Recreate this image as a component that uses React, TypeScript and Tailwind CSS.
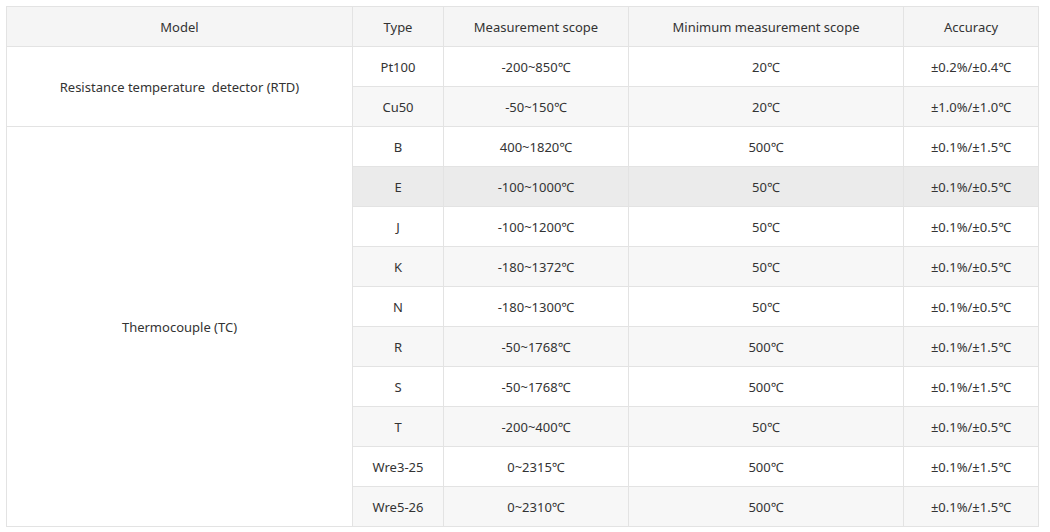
import React from "react";

const rows: { model?: string; span?: number; type: string; range: string; min: string; acc: string }[] = [
  { model: "Resistance temperature\u00a0 detector (RTD)", span: 2, type: "Pt100", range: "-200~850℃", min: "20℃", acc: "±0.2%/±0.4℃" },
  { type: "Cu50", range: "-50~150℃", min: "20℃", acc: "±1.0%/±1.0℃" },
  { model: "Thermocouple (TC)", span: 10, type: "B", range: "400~1820℃", min: "500℃", acc: "±0.1%/±1.5℃" },
  { type: "E", range: "-100~1000℃", min: "50℃", acc: "±0.1%/±0.5℃" },
  { type: "J", range: "-100~1200℃", min: "50℃", acc: "±0.1%/±0.5℃" },
  { type: "K", range: "-180~1372℃", min: "50℃", acc: "±0.1%/±0.5℃" },
  { type: "N", range: "-180~1300℃", min: "50℃", acc: "±0.1%/±0.5℃" },
  { type: "R", range: "-50~1768℃", min: "500℃", acc: "±0.1%/±1.5℃" },
  { type: "S", range: "-50~1768℃", min: "500℃", acc: "±0.1%/±1.5℃" },
  { type: "T", range: "-200~400℃", min: "50℃", acc: "±0.1%/±0.5℃" },
  { type: "Wre3-25", range: "0~2315℃", min: "500℃", acc: "±0.1%/±1.5℃" },
  { type: "Wre5-26", range: "0~2310℃", min: "500℃", acc: "±0.1%/±1.5℃" },
];

export default function App() {
  const cell = "border border-[#e3e3e3] text-center align-middle h-[40px] p-0 pt-[2px]";
  return (
    <div className="w-[1050px] h-[532px] bg-white pl-[6px] pt-[6px]" style={{ fontFamily: '"Noto Sans", "Open Sans", sans-serif' }}>
      <table className="border-collapse table-fixed w-[1032px] text-[13px] text-[#333] border border-[#dcdcdc]">
        <colgroup>
          <col className="w-[346px]" />
          <col className="w-[91px]" />
          <col className="w-[185px]" />
          <col className="w-[275px]" />
          <col className="w-[135px]" />
        </colgroup>
        <thead>
          <tr className="bg-[#f5f5f5]">
            <th className={`${cell} font-normal`}>Model</th>
            <th className={`${cell} font-normal`}>Type</th>
            <th className={`${cell} font-normal`}>Measurement scope</th>
            <th className={`${cell} font-normal`}>Minimum measurement scope</th>
            <th className={`${cell} font-normal`}>Accuracy</th>
          </tr>
        </thead>
        <tbody>
          {rows.map((r, i) => {
            const bg = i === 3 ? "bg-[#ebebeb]" : i % 2 === 1 ? "bg-[#f7f7f7]" : "bg-white";
            return (
              <tr key={i} className={bg}>
                {r.model && (
                  <td rowSpan={r.span} className={`${cell} bg-white`}>
                    {r.model}
                  </td>
                )}
                <td className={cell}>{r.type}</td>
                <td className={cell}>{r.range}</td>
                <td className={cell}>{r.min}</td>
                <td className={cell}>{r.acc}</td>
              </tr>
            );
          })}
        </tbody>
      </table>
    </div>
  );
}
